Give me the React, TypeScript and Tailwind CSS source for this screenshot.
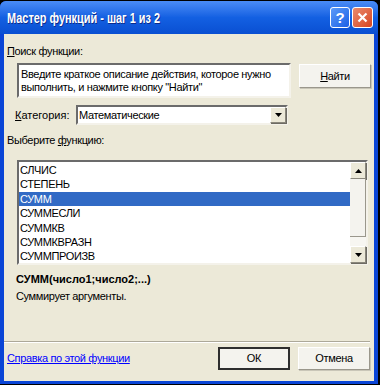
import React from 'react';

const ROWS = ['СЛЧИС', 'СТЕПЕНЬ', 'СУММ', 'СУММЕСЛИ', 'СУММКВ', 'СУММКВРАЗН', 'СУММПРОИЗВ'];

const sunken =
  'border-2 border-t-[#6b6b6b] border-l-[#6b6b6b] border-b-[#f4f2ea] border-r-[#f4f2ea] bg-white';

const Arrow = ({ up }: { up?: boolean }) => (
  <svg width="7" height="4" viewBox="0 0 7 4">
    <path d={up ? 'M0 4 L3.5 0 L7 4 Z' : 'M0 0 L7 0 L3.5 4 Z'} fill="#000" />
  </svg>
);

const SmallBtn = ({ children, className }: { children: React.ReactNode; className?: string }) => (
  <div
    className={`flex items-center justify-center bg-[#ece9d8] border border-t-white border-l-white border-b-[#8a877c] border-r-[#8a877c] shadow-[1px_1px_0_#6d6b63] ${className ?? ''}`}
  >
    {children}
  </div>
);

const Button = ({ label, isDefault }: { label: React.ReactNode; isDefault?: boolean }) => (
  <div
    className={`w-[72px] h-[23px] flex items-center justify-center text-black bg-[#f4f3ee] ${
      isDefault
        ? 'border-2 border-[#2e2e2e]'
        : 'border border-t-white border-l-white border-b-[#9a978c] border-r-[#9a978c] shadow-[1px_1px_0_#c9c6b8]'
    }`}
  >
    {label}
  </div>
);

export default function App() {
  return (
    <div className="w-[380px] h-[385px] bg-black pt-[1px] pr-[2px] pb-[2px] font-['Liberation_Sans',Arial,sans-serif]">
      <div className="w-[378px] h-[383px] rounded-t-[6px] bg-[#0a45d6] flex flex-col px-[4px] pb-[3px]">
        {/* Title bar */}
        <div className="h-[33px] -mx-[4px] px-[7px] rounded-t-[6px] bg-gradient-to-b from-[#4a8cf6] via-[#1360e2] to-[#0a4fd2] flex items-center">
          <div className="flex-1">
            <span className="inline-block origin-left scale-x-[0.78] text-white font-bold text-[14px] whitespace-nowrap [text-shadow:1px_1px_0_#0b2a8a]">
              Мастер функций - шаг 1 из 2
            </span>
          </div>
          <div className="flex gap-[2px] -mr-[2px]">
            <div className="w-[20px] h-[21px] rounded-[3px] border border-white bg-gradient-to-br from-[#5c9bf8] to-[#1a5ee6] flex items-center justify-center text-white font-bold text-[15px] leading-none">
              ?
            </div>
            <div className="w-[21px] h-[21px] rounded-[3px] border border-white bg-gradient-to-br from-[#e98a6c] to-[#d6421c] flex items-center justify-center">
              <svg width="11" height="11" viewBox="0 0 11 11">
                <path d="M1.5 1.5 L9.5 9.5 M9.5 1.5 L1.5 9.5" stroke="#fff" strokeWidth="2.2" />
              </svg>
            </div>
          </div>
        </div>

        {/* Client area */}
        <div className="flex-1 bg-[#ece9d8] text-[11px] tracking-[-0.35px] text-black flex flex-col">
          <div className="mt-[11px] ml-[3px] leading-[13px]">
            <span className="underline">П</span>оиск функции:
          </div>

          <div className="mt-[5px] flex items-start">
            <div className={`ml-[13px] w-[274px] h-[35px] ${sunken} px-[2px] pt-[3px] leading-[13px]`}>
              Введите краткое описание действия, которое нужно выполнить, и нажмите кнопку "Найти"
            </div>
            <div className="ml-[8px] mt-[1px] w-[72px] h-[24px] flex items-center justify-center bg-[#f4f3ee] border border-t-white border-l-white border-b-[#9a978c] border-r-[#9a978c] shadow-[1px_1px_0_#c9c6b8]">
              <span className="underline">Н</span>айти
            </div>
          </div>

          <div className="mt-[7px] flex items-center">
            <span className="ml-[11px] w-[61px] tracking-normal">
              <span className="underline">К</span>атегория:
            </span>
            <div className={`w-[212px] h-[20px] ${sunken} flex items-center pl-[1px]`}>
              <span className="flex-1">Математические</span>
              <SmallBtn className="w-[16px] h-[16px]">
                <Arrow />
              </SmallBtn>
            </div>
          </div>

          <div className="mt-[9px] ml-[3px] leading-[13px]">
            Выберите <span className="underline">ф</span>ункцию:
          </div>

          <div className={`mt-[13px] ml-[13px] w-[351px] h-[105px] ${sunken} flex`}>
            <div className="flex-1 pt-[1px]">
              {ROWS.map((r) => (
                <div
                  key={r}
                  className={`h-[14.4px] leading-[14.4px] pl-[1px] ${r === 'СУММ' ? 'bg-[#316ac5] text-white' : ''}`}
                >
                  {r}
                </div>
              ))}
            </div>
            <div className="w-[16px] flex flex-col bg-[#f7f6f1]">
              <SmallBtn className="h-[17px]">
                <Arrow up />
              </SmallBtn>
              <div className="h-[58px] bg-[#f4f3ee] border-b border-r border-[#9a978c]" />
              <div className="flex-1" />
              <SmallBtn className="h-[17px]">
                <Arrow />
              </SmallBtn>
            </div>
          </div>

          <div className="mt-[7px] ml-[12px] font-bold tracking-normal leading-[14px]">СУММ(число1;число2;...)</div>
          <div className="mt-[3px] ml-[12px] leading-[14px]">Суммирует аргументы.</div>

          <div className="mt-auto mr-[4px] border-t border-b border-t-[#aca899] border-b-white" />

          <div className="flex items-center pt-[4px] pb-[11px]">
            <span className="ml-[3px] flex-1 text-[#0000ff] underline">Справка по этой функции</span>
            <div className="flex gap-[8px] mr-[4px]">
              <Button label="ОК" isDefault />
              <Button label="Отмена" />
            </div>
          </div>
        </div>
      </div>
    </div>
  );
}
